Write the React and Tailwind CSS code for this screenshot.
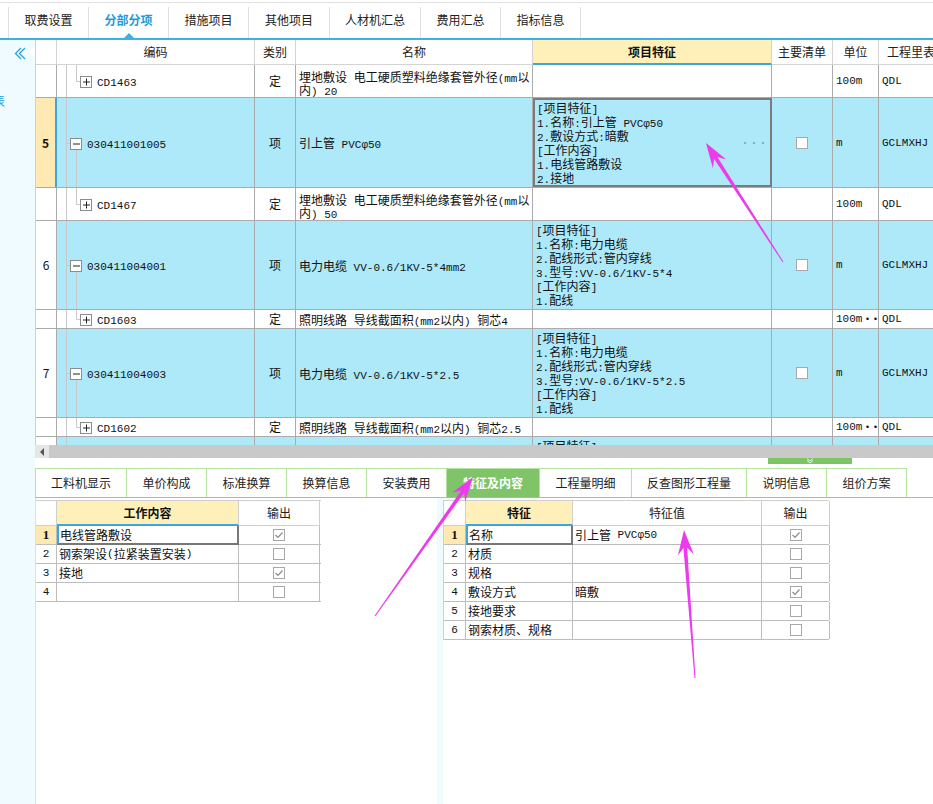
import React from "react";

const LAT = /^[\x20-\x7e\u00b7\u03c6]+$/;
function Tx({ s }) {
  const parts = s.split(/([\x20-\x7e\u00b7\u03c6]+)/).filter((p) => p !== "");
  return parts.map((p, i) =>
    LAT.test(p) ? (
      <span key={i} className="font-['Liberation_Mono',monospace] text-[11px] whitespace-pre leading-[0]">
        {p}
      </span>
    ) : (
      <span key={i}>{p}</span>
    )
  );
}

const rows = [
  { k: "c", h: "h-[33px]", H: 33, code: "CD1463", t: "定", name: ["埋地敷设 电工硬质塑料绝缘套管外径(mm以", "内) 20"], unit: "100m", q: "QDL" },
  {
    k: "p", h: "h-[90px]", H: 90, num: "5", sel: true, code: "030411001005", t: "项", name: ["引上管 PVCφ50"],
    feat: ["[项目特征]", "1.名称:引上管 PVCφ50", "2.敷设方式:暗敷", "[工作内容]", "1.电线管路敷设", "2.接地"], unit: "m", q: "GCLMXHJ",
  },
  { k: "c", h: "h-[33px]", H: 33, code: "CD1467", t: "定", name: ["埋地敷设 电工硬质塑料绝缘套管外径(mm以", "内) 50"], unit: "100m", q: "QDL" },
  {
    k: "p", h: "h-[89px]", H: 89, num: "6", code: "030411004001", t: "项", name: ["电力电缆 VV-0.6/1KV-5*4mm2"],
    feat: ["[项目特征]", "1.名称:电力电缆", "2.配线形式:管内穿线", "3.型号:VV-0.6/1KV-5*4", "[工作内容]", "1.配线"], unit: "m", q: "GCLMXHJ",
  },
  { k: "c", h: "h-[19px]", H: 19, code: "CD1603", t: "定", name: ["照明线路 导线截面积(mm2以内) 铜芯4"], unit: "100m", more: true, q: "QDL" },
  {
    k: "p", h: "h-[89px]", H: 89, num: "7", code: "030411004003", t: "项", name: ["电力电缆 VV-0.6/1KV-5*2.5"],
    feat: ["[项目特征]", "1.名称:电力电缆", "2.配线形式:管内穿线", "3.型号:VV-0.6/1KV-5*2.5", "[工作内容]", "1.配线"], unit: "m", q: "GCLMXHJ",
  },
  { k: "c", h: "h-[19px]", H: 19, code: "CD1602", t: "定", name: ["照明线路 导线截面积(mm2以内) 铜芯2.5"], unit: "100m", more: true, q: "QDL" },
  {
    k: "p", h: "h-[89px]", H: 89, num: "8", hideNum: true, code: "030411004002", t: "项", name: ["电力电缆"],
    feat: ["[项目特征]", "1.名称:电力电缆", "2.配线形式:管内穿线", "3.型号:VV-0.6/1KV-5*2.5", "[工作内容]", "1.配线"], unit: "m", q: "GCLMXHJ", top: true,
  },
];

function Tree({ kind, H }) {
  const h = H - 1;
  const my = Math.round(h / 2);
  if (kind === "p") {
    return (
      <svg width="28" height={h} className="shrink-0 block">
        <line x1="9.5" y1="0" x2="9.5" y2={h} stroke="#c8c8c8" />
        <line x1="9.5" y1={my + 0.5} x2="13.5" y2={my + 0.5} stroke="#c8c8c8" />
        <line x1="19.5" y1={my + 6} x2="19.5" y2={h} stroke="#c8c8c8" />
        <rect x="13.5" y={my - 4.5} width="11" height="11" fill="#fff" stroke="#8c8c8c" />
        <line x1="16" y1={my + 1} x2="23" y2={my + 1} stroke="#222" />
      </svg>
    );
  }
  return (
    <svg width="37" height={h} className="shrink-0 block">
      <line x1="9.5" y1="0" x2="9.5" y2={h} stroke="#c8c8c8" />
      <line x1="19.5" y1="0" x2="19.5" y2={my + 0.5} stroke="#c8c8c8" />
      <line x1="19.5" y1={my + 0.5} x2="23.5" y2={my + 0.5} stroke="#c8c8c8" />
      <rect x="23.5" y={my - 4.5} width="11" height="11" fill="#fff" stroke="#8c8c8c" />
      <line x1="26" y1={my + 1} x2="33" y2={my + 1} stroke="#222" />
      <line x1="29.5" y1={my - 2.5} x2="29.5" y2={my + 4.5} stroke="#222" />
    </svg>
  );
}

function Box({ checked }) {
  return (
    <div className="w-[12px] h-[12px] border border-[#a8a8a8] bg-white flex items-center justify-center">
      {checked && (
        <svg width="10" height="10" viewBox="0 0 10 10">
          <path d="M1.5 5 L4 7.5 L8.5 2.5" fill="none" stroke="#8a8a8a" strokeWidth="1.2" />
        </svg>
      )}
    </div>
  );
}

function GridRow({ r }) {
  const blue = r.k === "p";
  const bg = blue ? "bg-[#aee9f9]" : "bg-white";
  return (
    <div className={`flex shrink-0 ${r.h} border-b border-[#ababab] ${bg}`}>
      <div
        className={`w-[21px] shrink-0 flex items-center justify-center ${
          r.sel ? "bg-[#fde9b1] border-r-2 border-r-[#3aa6dd] font-bold" : "bg-white border-r border-r-[#ababab]"
        }`}
      >
        {r.hideNum ? "" : r.num}
      </div>
      <div className="w-[198px] shrink-0 border-r border-r-[#ababab] flex items-center overflow-hidden">
        <Tree kind={r.k} H={r.H} />
        <div className={`${r.k === "p" ? "ml-[2px]" : "ml-[3px]"} whitespace-nowrap`}>
          <Tx s={r.code} />
        </div>
      </div>
      <div className="w-[41px] shrink-0 border-r border-r-[#ababab] flex items-center justify-center">{r.t}</div>
      <div
        className={`w-[237px] shrink-0 border-r border-r-[#ababab] flex flex-col justify-center pl-[3px] overflow-hidden ${
          r.name.length > 1 ? "pt-[3px]" : ""
        }`}
      >
        {r.name.map((n, i) => (
          <div key={i} className="h-[13px] leading-[13px] whitespace-nowrap">
            <Tx s={n} />
          </div>
        ))}
      </div>
      <div
        className={`w-[239px] shrink-0 flex overflow-hidden ${
          r.sel ? "border-2 border-[#7b7b7b] pl-[2px]" : "border-r border-r-[#ababab] pl-[3px]"
        } ${r.top ? "items-start pt-[2px]" : "items-center"}`}
      >
        <div className="flex-1">
          {(r.feat || []).map((f, i) => (
            <div key={i} className="h-[14px] leading-[14px] whitespace-nowrap">
              <Tx s={f} />
            </div>
          ))}
        </div>
        {r.sel && <span className="mr-[3px] text-[#7aa3c6] text-[10px] tracking-[-1px]">···</span>}
      </div>
      <div className="w-[61px] shrink-0 border-r border-r-[#ababab] flex items-center justify-center">
        {blue && <Box />}
      </div>
      <div className="w-[46px] shrink-0 border-r border-r-[#ababab] flex items-center pl-[3px] whitespace-nowrap overflow-hidden">
        <Tx s={r.unit} />
        {r.more && <span className="text-[10px] font-bold tracking-[-2px] leading-[0]">···</span>}
      </div>
      <div className="w-[66px] shrink-0 border-r border-r-[#ababab] flex items-center pl-[3px] whitespace-nowrap">
        <Tx s={r.q} />
      </div>
    </div>
  );
}

function arrowPts(tx, ty, px, py, hl = 25, hw = 16, sw = 3.8, tw = 1) {
  const dx = px - tx, dy = py - ty;
  const L = Math.hypot(dx, dy);
  const ux = dx / L, uy = dy / L;
  const nx = -uy, ny = ux;
  const bx = px - ux * hl, by = py - uy * hl;
  const cx = px - ux * hl * 0.72, cy = py - uy * hl * 0.72;
  const pts = [
    [px, py],
    [bx + (nx * hw) / 2, by + (ny * hw) / 2],
    [cx + (nx * sw) / 2, cy + (ny * sw) / 2],
    [tx + (nx * tw) / 2, ty + (ny * tw) / 2],
    [tx - (nx * tw) / 2, ty - (ny * tw) / 2],
    [cx - (nx * sw) / 2, cy - (ny * sw) / 2],
    [bx - (nx * hw) / 2, by - (ny * hw) / 2],
  ];
  return pts.map((p) => p.map((v) => v.toFixed(1)).join(",")).join(" ");
}

const topTabs = [
  ["取费设置", "w-[80px]"],
  ["分部分项", "w-[80px]", true],
  ["措施项目", "w-[80px]"],
  ["其他项目", "w-[81px]"],
  ["人材机汇总", "w-[91px]"],
  ["费用汇总", "w-[80px]"],
  ["指标信息", "w-[80px]"],
];

const botTabs = [
  ["工料机显示", "w-[91px]"],
  ["单价构成", "w-[80px]"],
  ["标准换算", "w-[80px]"],
  ["换算信息", "w-[80px]"],
  ["安装费用", "w-[80px]"],
  ["特征及内容", "w-[93px]", true],
  ["工程量明细", "w-[92px]"],
  ["反查图形工程量", "w-[115px]"],
  ["说明信息", "w-[80px]"],
  ["组价方案", "w-[80px]"],
];

const work = [
  ["1", "电线管路敷设", true],
  ["2", "钢索架设(拉紧装置安装)", false],
  ["3", "接地", true],
  ["4", "", false],
];

const feats = [
  ["1", "名称", "引上管 PVCφ50", true],
  ["2", "材质", "", false],
  ["3", "规格", "", false],
  ["4", "敷设方式", "暗敷", true],
  ["5", "接地要求", "", false],
  ["6", "钢索材质、规格", "", false],
];

export default function App() {
  return (
    <div className="relative w-[933px] h-[804px] overflow-hidden bg-white text-[12px] text-[#111] font-['Noto_Sans_CJK_SC','Liberation_Sans',sans-serif]">
      {/* top tabs */}
      <div className="h-[40px] flex flex-col">
        <div className="h-[2px]" />
        <div className="h-[1px] bg-[#e0e0e0]" />
        <div className="flex-1 flex pl-[8px]">
          <div className="flex mt-[4px] border-l border-l-[#e0e0e0]">
            {topTabs.map(([t, w, act]) => (
              <div key={t} className={`${w} border-r border-r-[#e0e0e0] flex flex-col items-center`}>
                <div className={`flex-1 flex items-center ${act ? "text-[#1d9bd7] font-bold" : "text-[#222]"}`}>{t}</div>
                {act ? (
                  <div className="w-0 h-0 border-l-[5px] border-r-[5px] border-b-[5px] border-l-transparent border-r-transparent border-b-[#3fb0e4]" />
                ) : (
                  <div className="h-[5px]" />
                )}
              </div>
            ))}
          </div>
        </div>
        <div className="h-[2px] bg-[#3fb0e4]" />
      </div>

      <div className="flex h-[764px]">
        {/* sidebar */}
        <div className="w-[35px] shrink-0 bg-[#effbfe] flex flex-col overflow-hidden">
          <svg width="35" height="24" className="block">
            <polyline points="21,8 15.5,13.5 21,19" fill="none" stroke="#2a9fd8" strokeWidth="1.3" />
            <polyline points="25,8 19.5,13.5 25,19" fill="none" stroke="#2a9fd8" strokeWidth="1.3" />
            <polygon points="29,12 35,6 35,18" fill="#ffffff" />
          </svg>
          <div className="mt-[30px] ml-[-7px] text-[#1e9ad6] leading-[14px]">表</div>
        </div>

        {/* main */}
        <div className="flex-1 min-w-0 flex flex-col overflow-hidden">
          {/* grid */}
          <div className="h-[405px] flex flex-col overflow-hidden border-l border-l-[#d0d0d0]">
            <div className="flex h-[25px] shrink-0 bg-white text-[#222]">
              <div className="w-[21px] shrink-0 border-r border-b border-[#d4d4d4]" />
              <div className="w-[198px] shrink-0 border-r border-b border-[#d4d4d4] flex items-center justify-center">编码</div>
              <div className="w-[41px] shrink-0 border-r border-b border-[#d4d4d4] flex items-center justify-center">类别</div>
              <div className="w-[237px] shrink-0 border-r border-b border-[#d4d4d4] flex items-center justify-center">名称</div>
              <div className="w-[239px] shrink-0 border-r border-r-[#d4d4d4] border-b-2 border-b-[#3aa6dd] bg-[#fff0b9] font-bold text-[#111] flex items-center justify-center">
                项目特征
              </div>
              <div className="w-[61px] shrink-0 border-r border-b border-[#d4d4d4] flex items-center justify-center">主要清单</div>
              <div className="w-[46px] shrink-0 border-r border-b border-[#d4d4d4] flex items-center justify-center">单位</div>
              <div className="w-[66px] shrink-0 border-r border-b border-[#d4d4d4] flex items-center pl-[8px] whitespace-nowrap">工程里表</div>
            </div>
            {rows.map((r, i) => (
              <GridRow key={i} r={r} />
            ))}
          </div>

          {/* scrollbar */}
          <div className="h-[13px] shrink-0 bg-[#c9c9c9] flex">
            <div className="w-[14px] h-full bg-[#e6e6e6] flex items-center justify-center">
              <div className="w-0 h-0 border-t-[4px] border-b-[4px] border-r-[4px] border-t-transparent border-b-transparent border-r-[#555]" />
            </div>
          </div>

          {/* splitter */}
          <div className="h-[10px] shrink-0 bg-white">
            <div className="ml-[733px] w-[84px] h-[6px] bg-[#7dc462] flex items-center justify-center">
              <svg width="10" height="6" viewBox="0 0 10 6">
                <polyline points="2,0.5 5,3 8,0.5" fill="none" stroke="#e8f6e2" strokeWidth="1" />
                <polyline points="2,2.5 5,5 8,2.5" fill="none" stroke="#e8f6e2" strokeWidth="1" />
              </svg>
            </div>
          </div>

          {/* bottom tabs */}
          <div className="h-[30px] shrink-0 flex border-b border-b-[#90d07a]">
            <div className="flex border-l border-l-[#b5e3a0]">
              {botTabs.map(([t, w, act]) => (
                <div
                  key={t}
                  className={`${w} border-t border-r border-[#b5e3a0] flex items-center justify-center ${
                    act ? "bg-[#80c469] text-white font-bold" : "bg-white text-[#222]"
                  }`}
                >
                  {t}
                </div>
              ))}
            </div>
          </div>

          {/* bottom panels */}
          <div className="flex-1 flex min-h-0">
            <div className="w-[402px] shrink-0 bg-white border-l border-l-[#d6e2e6] pt-[2px]">
              <div className="w-[285px] border-t border-t-[#cfcfcf]">
                <div className="flex h-[25px]">
                  <div className="w-[21px] shrink-0 border-r border-b border-[#cfcfcf]" />
                  <div className="w-[182px] shrink-0 border-r border-r-[#cfcfcf] border-b-2 border-b-[#3aa6dd] bg-[#fff0b9] font-bold flex items-center justify-center">
                    工作内容
                  </div>
                  <div className="w-[81px] shrink-0 border-r border-b border-[#cfcfcf] flex items-center justify-center text-[#222]">输出</div>
                </div>
                {work.map(([n, t, c]) => (
                  <div key={n} className="flex h-[19px] border-b border-b-[#bdbdbd]">
                    <div
                      className={`w-[21px] shrink-0 border-r border-r-[#bdbdbd] flex items-center justify-center ${
                        n === "1" ? "bg-[#fde9b1] font-bold font-['Liberation_Serif',serif] text-[13px]" : "font-['Liberation_Mono',monospace] text-[11px]"
                      }`}
                    >
                      {n}
                    </div>
                    <div
                      className={`w-[182px] shrink-0 flex items-center whitespace-nowrap ${
                        n === "1"
                          ? "border-l-2 border-l-[#3aa6dd] border-r-2 border-r-[#777] border-b-2 border-b-[#777] mb-[-1px] pl-[1px]"
                          : "border-r border-r-[#bdbdbd] pl-[2px]"
                      }`}
                    >
                      <Tx s={t} />
                    </div>
                    <div className="w-[81px] shrink-0 border-r border-r-[#bdbdbd] flex items-center justify-center">
                      <Box checked={c} />
                    </div>
                  </div>
                ))}
              </div>
            </div>
            <div className="w-[6px] shrink-0 bg-[#eefbfd]" />
            <div className="flex-1 bg-white pt-[2px]">
              <div className="w-[386px] border-t border-t-[#cfcfcf] border-l border-l-[#cfcfcf]">
                <div className="flex h-[25px]">
                  <div className="w-[22px] shrink-0 border-r border-b border-[#cfcfcf]" />
                  <div className="w-[107px] shrink-0 border-r border-r-[#cfcfcf] border-b-2 border-b-[#3aa6dd] bg-[#fff0b9] font-bold flex items-center justify-center">
                    特征
                  </div>
                  <div className="w-[189px] shrink-0 border-r border-b border-[#cfcfcf] flex items-center justify-center text-[#222]">特征值</div>
                  <div className="w-[68px] shrink-0 border-r border-b border-[#cfcfcf] flex items-center justify-center text-[#222]">输出</div>
                </div>
                {feats.map(([n, a, b, c]) => (
                  <div key={n} className="flex h-[19px] border-b border-b-[#bdbdbd]">
                    <div
                      className={`w-[22px] shrink-0 border-r border-r-[#bdbdbd] flex items-center justify-center ${
                        n === "1" ? "bg-[#fde9b1] font-bold font-['Liberation_Serif',serif] text-[13px]" : "font-['Liberation_Mono',monospace] text-[11px]"
                      }`}
                    >
                      {n}
                    </div>
                    <div
                      className={`w-[107px] shrink-0 flex items-center whitespace-nowrap ${
                        n === "1"
                          ? "border-l-2 border-l-[#3aa6dd] border-r-2 border-r-[#777] border-b-2 border-b-[#777] mb-[-1px] pl-[1px]"
                          : "border-r border-r-[#bdbdbd] pl-[2px]"
                      }`}
                    >
                      {a}
                    </div>
                    <div className="w-[189px] shrink-0 border-r border-r-[#bdbdbd] flex items-center pl-[2px] whitespace-nowrap">
                      <Tx s={b} />
                    </div>
                    <div className="w-[68px] shrink-0 border-r border-r-[#bdbdbd] flex items-center justify-center">
                      <Box checked={c} />
                    </div>
                  </div>
                ))}
              </div>
            </div>
          </div>
        </div>
      </div>

      {/* annotation arrows */}
      <svg className="absolute inset-0 pointer-events-none" width="933" height="804">
        <polygon points={arrowPts(783, 262, 706, 143)} fill="#ec3aec" />
        <polygon points={arrowPts(375, 616, 473, 477)} fill="#ec3aec" />
        <polygon points={arrowPts(695, 678, 684, 530)} fill="#ec3aec" />
      </svg>
    </div>
  );
}
